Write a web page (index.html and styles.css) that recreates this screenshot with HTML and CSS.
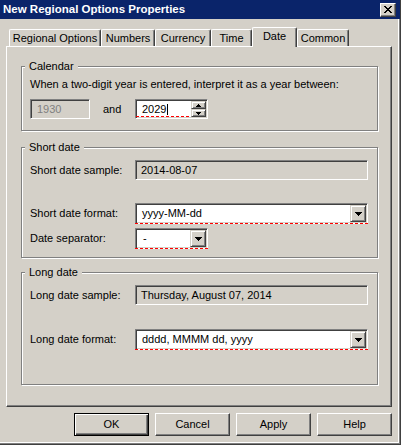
FILE: index.html
```html
<!DOCTYPE html>
<html>
<head>
<meta charset="utf-8">
<link rel="stylesheet" href="styles.css">
</head>
<body>
<div class="window">
  <div class="titlebar">
    <span class="title">New Regional Options Properties</span>
    <span class="close">
      <svg width="8" height="7" viewBox="0 0 8 7" shape-rendering="crispEdges"><path d="M0 0h2v1h1v1h2v-1h1v-1h2v1h-1v1h-1v1h-1v1h1v1h1v1h1v1h-2v-1h-1v-1h-2v1h-1v1h-2v-1h1v-1h1v-1h1v-1h-1v-1h-1v-1h-1z" fill="#000"/></svg>
    </span>
  </div>
  <div class="body">
    <div class="tabs">
      <div class="tab t-regional">Regional Options</div>
      <div class="tab t-numbers">Numbers</div>
      <div class="tab t-currency">Currency</div>
      <div class="tab t-time">Time</div>
      <div class="tab t-date active">Date</div>
      <div class="tab t-common">Common</div>
    </div>
    <div class="panel">
      <div class="group group-cal">
        <div class="legend">Calendar</div>
        <div class="desc">When a two-digit year is entered, interpret it as a year between:</div>
        <div class="row row-years">
          <div class="field field-disabled">1930</div>
          <span class="and">and</span>
          <div class="spin">
            <div class="spin-edit invalid">2029<span class="caret"></span></div>
            <div class="spin-btns">
              <div class="sbtn"><svg width="5" height="3" viewBox="0 0 5 3" shape-rendering="crispEdges"><path d="M2 0h1v1h1v1h1v1h-5v-1h1v-1h1z" fill="#000"/></svg></div>
              <div class="sbtn"><svg width="5" height="3" viewBox="0 0 5 3" shape-rendering="crispEdges"><path d="M0 0h5v1h-1v1h-1v1h-1v-1h-1v-1h-1z" fill="#000"/></svg></div>
            </div>
          </div>
        </div>
      </div>

      <div class="group group-short">
        <div class="legend">Short date</div>
        <div class="row row-sample">
          <span class="label">Short date sample:</span>
          <div class="sample">2014-08-07</div>
        </div>
        <div class="row row-format">
          <span class="label">Short date format:</span>
          <div class="combo combo-wide invalid">
            <span class="combo-text">yyyy-MM-dd</span>
            <span class="combo-btn"><svg width="7" height="4" viewBox="0 0 7 4" shape-rendering="crispEdges"><path d="M0 0h7v1h-1v1h-1v1h-1v1h-1v-1h-1v-1h-1v-1h-1z" fill="#000"/></svg></span>
          </div>
        </div>
        <div class="row row-sep">
          <span class="label">Date separator:</span>
          <div class="combo combo-small invalid">
            <span class="combo-text combo-text-sep">-</span>
            <span class="combo-btn"><svg width="7" height="4" viewBox="0 0 7 4" shape-rendering="crispEdges"><path d="M0 0h7v1h-1v1h-1v1h-1v1h-1v-1h-1v-1h-1v-1h-1z" fill="#000"/></svg></span>
          </div>
        </div>
      </div>

      <div class="group group-long">
        <div class="legend">Long date</div>
        <div class="row row-sample">
          <span class="label">Long date sample:</span>
          <div class="sample">Thursday, August 07, 2014</div>
        </div>
        <div class="row row-format-long">
          <span class="label">Long date format:</span>
          <div class="combo combo-wide invalid">
            <span class="combo-text">dddd, MMMM dd, yyyy</span>
            <span class="combo-btn"><svg width="7" height="4" viewBox="0 0 7 4" shape-rendering="crispEdges"><path d="M0 0h7v1h-1v1h-1v1h-1v1h-1v-1h-1v-1h-1v-1h-1z" fill="#000"/></svg></span>
          </div>
        </div>
      </div>
    </div>
    <div class="buttons">
      <div class="btn btn-default">OK</div>
      <div class="btn">Cancel</div>
      <div class="btn">Apply</div>
      <div class="btn">Help</div>
    </div>
  </div>
</div>
</body>
</html>
```

FILE: styles.css
```css
* { box-sizing: border-box; }
html, body { margin: 0; padding: 0; }
body {
  background: #d4d0c8;
  font-family: "Liberation Sans", Arial, sans-serif;
  font-size: 11px;
  line-height: 13px;
  color: #000;
}
.window {
  width: 401px;
  height: 445px;
  border-right: 1px solid #404040;
  border-bottom: 1px solid #404040;
  box-shadow: inset -1px -1px #808080, inset -2px -2px #ffffff;
  display: flex;
  flex-direction: column;
}
.titlebar {
  height: 19px;
  background: #0a246a;
  color: #fff;
  font-weight: bold;
  display: flex;
  align-items: center;
  justify-content: space-between;
  padding: 0 4px 0 3px;
  flex: none;
}
.title { font-size: 11.5px; }
.close {
  width: 16px;
  height: 14px;
  background: #d4d0c8;
  border: 1px solid;
  border-color: #fff #404040 #404040 #fff;
  box-shadow: inset -1px -1px #808080;
  display: flex;
  align-items: center;
  justify-content: center;
}
.body {
  padding: 8px 0 0 6px;
}
.tabs {
  display: flex;
  align-items: flex-end;
  height: 19px;
  margin-left: 3px;
}
.tab {
  height: 17px;
  border-top: 1px solid #fff;
  border-left: 1px solid #fff;
  border-right: 1px solid #404040;
  box-shadow: inset -1px 0 #808080;
  border-radius: 2px 2px 0 0;
  display: flex;
  align-items: center;
  justify-content: center;
  padding-top: 1px;
}
.tab.active {
  height: 20px;
  margin-bottom: -1px;
  background: #d4d0c8;
  position: relative;
  z-index: 1;
  padding-top: 0;
  padding-bottom: 3px;
}
.t-regional { width: 92px; }
.t-numbers { width: 54px; }
.t-currency { width: 56px; }
.t-time { width: 41px; }
.t-date { width: 45px; }
.t-common { width: 52px; }

.panel {
  width: 386px;
  height: 361px;
  border-top: 1px solid #fff;
  border-left: 1px solid #fff;
  border-right: 1px solid #404040;
  border-bottom: 1px solid #404040;
  box-shadow: inset -1px -1px #808080;
  padding: 19px 13px 0 14px;
}
.group {
  border: 1px solid #808080;
  box-shadow: inset 1px 1px #fff, 1px 1px #fff;
  padding: 0 8px;
}
.legend {
  display: table;
  margin: -7px 0 0 -5px;
  padding: 0 4px;
  background: #d4d0c8;
}
.desc { margin-top: 5px; }
.row {
  display: flex;
  align-items: center;
}
.row-years { margin-top: 8px; }
.group-cal { padding-bottom: 11px; }
.group-short { margin-top: 16px; padding-bottom: 8px; }
.group-long { margin-top: 14px; padding-bottom: 34px; }
.row-sample { margin-top: 6px; }
.row-format { margin-top: 23px; }
.row-sep { margin-top: 4px; }
.row-format-long { margin-top: 24px; }

.label { width: 105px; flex: none; }

.sunken {
}
.field, .spin, .sample, .combo {
  border: 1px solid;
  border-color: #808080 #fff #fff #808080;
  box-shadow: inset 1px 1px #404040, inset -1px -1px #d4d0c8;
}
.field {
  width: 60px;
  height: 20px;
  padding: 1px 0 0 6px;
  display: flex;
  align-items: center;
}
.field-disabled { color: #808080; background: #d4d0c8; }
.and { width: 32px; margin-left: 13px; }
.spin {
  width: 73px;
  height: 20px;
  display: flex;
  background: #fff;
  padding: 1px;
}
.spin-edit {
  flex: 1;
  display: flex;
  align-items: center;
  padding-left: 5px;
  position: relative;
}
.caret {
  width: 1px;
  height: 11px;
  background: #000;
  margin-left: 1px;
}
.spin-btns {
  width: 15px;
  display: flex;
  flex-direction: column;
}
.sbtn {
  height: 8px;
  background: #d4d0c8;
  border: 1px solid;
  border-color: #d4d0c8 #404040 #404040 #d4d0c8;
  box-shadow: inset 1px 1px #fff, inset -1px -1px #808080;
  display: flex;
  align-items: center;
  justify-content: center;
}
.sbtn svg { display: block; }
.sample {
  width: 233px;
  height: 20px;
  background: #d4d0c8;
  padding: 1px 0 0 5px;
  display: flex;
  align-items: center;
}
.combo {
  height: 21px;
  background: #fff;
  display: flex;
  padding: 1px;
  position: relative;
}
.combo-wide { width: 233px; }
.combo-small { width: 73px; }
.combo-text {
  flex: 1;
  display: flex;
  align-items: center;
  padding-left: 5px;
}
.combo-text-sep { padding-left: 6px; }
.combo-btn {
  width: 16px;
  background: #d4d0c8;
  border: 1px solid;
  border-color: #d4d0c8 #404040 #404040 #d4d0c8;
  box-shadow: inset 1px 1px #fff, inset -1px -1px #808080;
  display: flex;
  align-items: center;
  justify-content: center;
}
.combo-btn svg { display: block; }
.invalid::after {
  content: "";
  position: absolute;
  left: -1px;
  right: -1px;
  bottom: -1px;
  height: 1px;
  background: repeating-linear-gradient(to right, #f00 0 3px, transparent 3px 5px);
}
.spin-edit.invalid::after { left: -1px; right: 0; bottom: 0; }

.buttons {
  width: 386px;
  display: flex;
  justify-content: flex-end;
  gap: 6px;
  margin-top: 6px;
}
.btn {
  width: 75px;
  height: 23px;
  border: 1px solid;
  border-color: #fff #404040 #404040 #fff;
  box-shadow: inset -1px -1px #808080;
  display: flex;
  align-items: center;
  justify-content: center;
}
.btn-default {
  border-color: #000;
  box-shadow: inset 1px 1px #fff, inset -1px -1px #404040, inset -2px -2px #808080;
}
```
